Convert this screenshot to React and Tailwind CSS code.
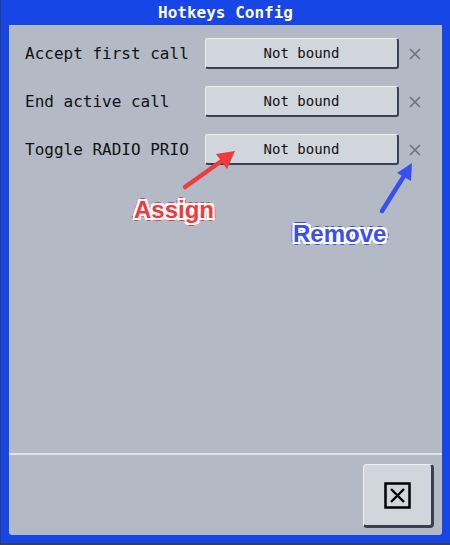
import React from 'react';

const hotkeys = ['Accept first call', 'End active call', 'Toggle RADIO PRIO'];

const mono = { fontFamily: '"DejaVu Sans Mono", "Liberation Mono", monospace' };

function SmallX() {
  return (
    <svg width="12" height="12" viewBox="0 0 12 12" className="shrink-0">
      <path d="M1 1 L11 11 M11 1 L1 11" stroke="#6b7280" strokeWidth="1.6" fill="none" />
    </svg>
  );
}

function HotkeyRow({ label }) {
  return (
    <div className="flex items-center">
      <div className="w-[180px] text-[16px] text-[#111111]" style={mono}>
        {label}
      </div>
      <button
        className="h-[31px] w-[194px] rounded-[3px] border-t border-l border-t-[#eef0f3] border-l-[#eef0f3] border-r-2 border-b-2 border-r-[#374151] border-b-[#374151] bg-[#d1d5dc] text-[14px] text-[#111111]"
        style={mono}
      >
        Not bound
      </button>
      <div className="ml-[10px]">
        <SmallX />
      </div>
    </div>
  );
}

export default function App() {
  return (
    <div className="relative flex h-[545px] w-[450px] flex-col border-b-2 border-l border-b-[#374151] border-l-[#2a3a80] bg-[#1746e6]">
      <div
        className="flex h-[25px] items-center justify-center text-[16px] font-bold text-white"
        style={mono}
      >
        Hotkeys Config
      </div>

      <div className="mx-[8px] mb-[8px] flex flex-1 flex-col rounded-b-[3px] bg-[#b3b9c5]">
        <div className="flex flex-col gap-[17px] pl-[16px] pt-[13px]">
          {hotkeys.map((k) => (
            <HotkeyRow key={k} label={k} />
          ))}
        </div>

        <div className="flex-1" />

        <div className="h-[2px] bg-[#e2e4e8]" />

        <div className="flex justify-end pb-[7px] pr-[8px] pt-[9px]">
          <button className="flex h-[64px] w-[71px] items-center justify-center rounded-[4px] border-t border-l border-t-[#eef0f3] border-l-[#eef0f3] border-r-[3px] border-b-[3px] border-r-[#374151] border-b-[#374151] bg-[#d1d5dc]">
            <svg width="27" height="27" viewBox="0 0 27 27">
              <rect x="1.5" y="1.5" width="24" height="24" fill="#d1d5dc" stroke="#000" strokeWidth="2.5" />
              <path d="M7 7 L20 20 M20 7 L7 20" stroke="#000" strokeWidth="2.4" fill="none" />
            </svg>
          </button>
        </div>
      </div>

      {/* annotation overlay */}
      <svg className="pointer-events-none absolute left-0 top-0" width="450" height="545">
        <line x1="184" y1="187" x2="222" y2="160" stroke="#ef3b3b" strokeWidth="4.5" strokeLinecap="round" />
        <polygon points="234,151 215,154 226,169" fill="#ef3b3b" />
        <line x1="381" y1="211" x2="403" y2="176" stroke="#3b4ff0" strokeWidth="4.5" strokeLinecap="round" />
        <polygon points="411,163 396,173 410,181" fill="#3b4ff0" />
      </svg>
      <div
        className="absolute left-[133px] top-[195px] text-[24px] font-bold leading-[30px] text-[#ef3b3b] [text-shadow:0_0_1px_#fff,2px_0_0_#fff,-2px_0_0_#fff,0_2px_0_#fff,0_-2px_0_#fff,2px_2px_0_#fff,-2px_-2px_0_#fff,2px_-2px_0_#fff,-2px_2px_0_#fff,3px_0_0_#ef3b3b,-3px_0_0_#ef3b3b,0_3px_0_#ef3b3b,0_-3px_0_#ef3b3b]"
        style={{ fontFamily: '"Liberation Sans", Arial, sans-serif' }}
      >
        Assign
      </div>
      <div
        className="absolute left-[292px] top-[219px] text-[24px] font-bold leading-[30px] text-[#3b4ff0] [text-shadow:0_0_1px_#fff,2px_0_0_#fff,-2px_0_0_#fff,0_2px_0_#fff,0_-2px_0_#fff,2px_2px_0_#fff,-2px_-2px_0_#fff,2px_-2px_0_#fff,-2px_2px_0_#fff,3px_0_0_#3b4ff0,-3px_0_0_#3b4ff0,0_3px_0_#3b4ff0,0_-3px_0_#3b4ff0]"
        style={{ fontFamily: '"Liberation Sans", Arial, sans-serif' }}
      >
        Remove
      </div>
    </div>
  );
}
